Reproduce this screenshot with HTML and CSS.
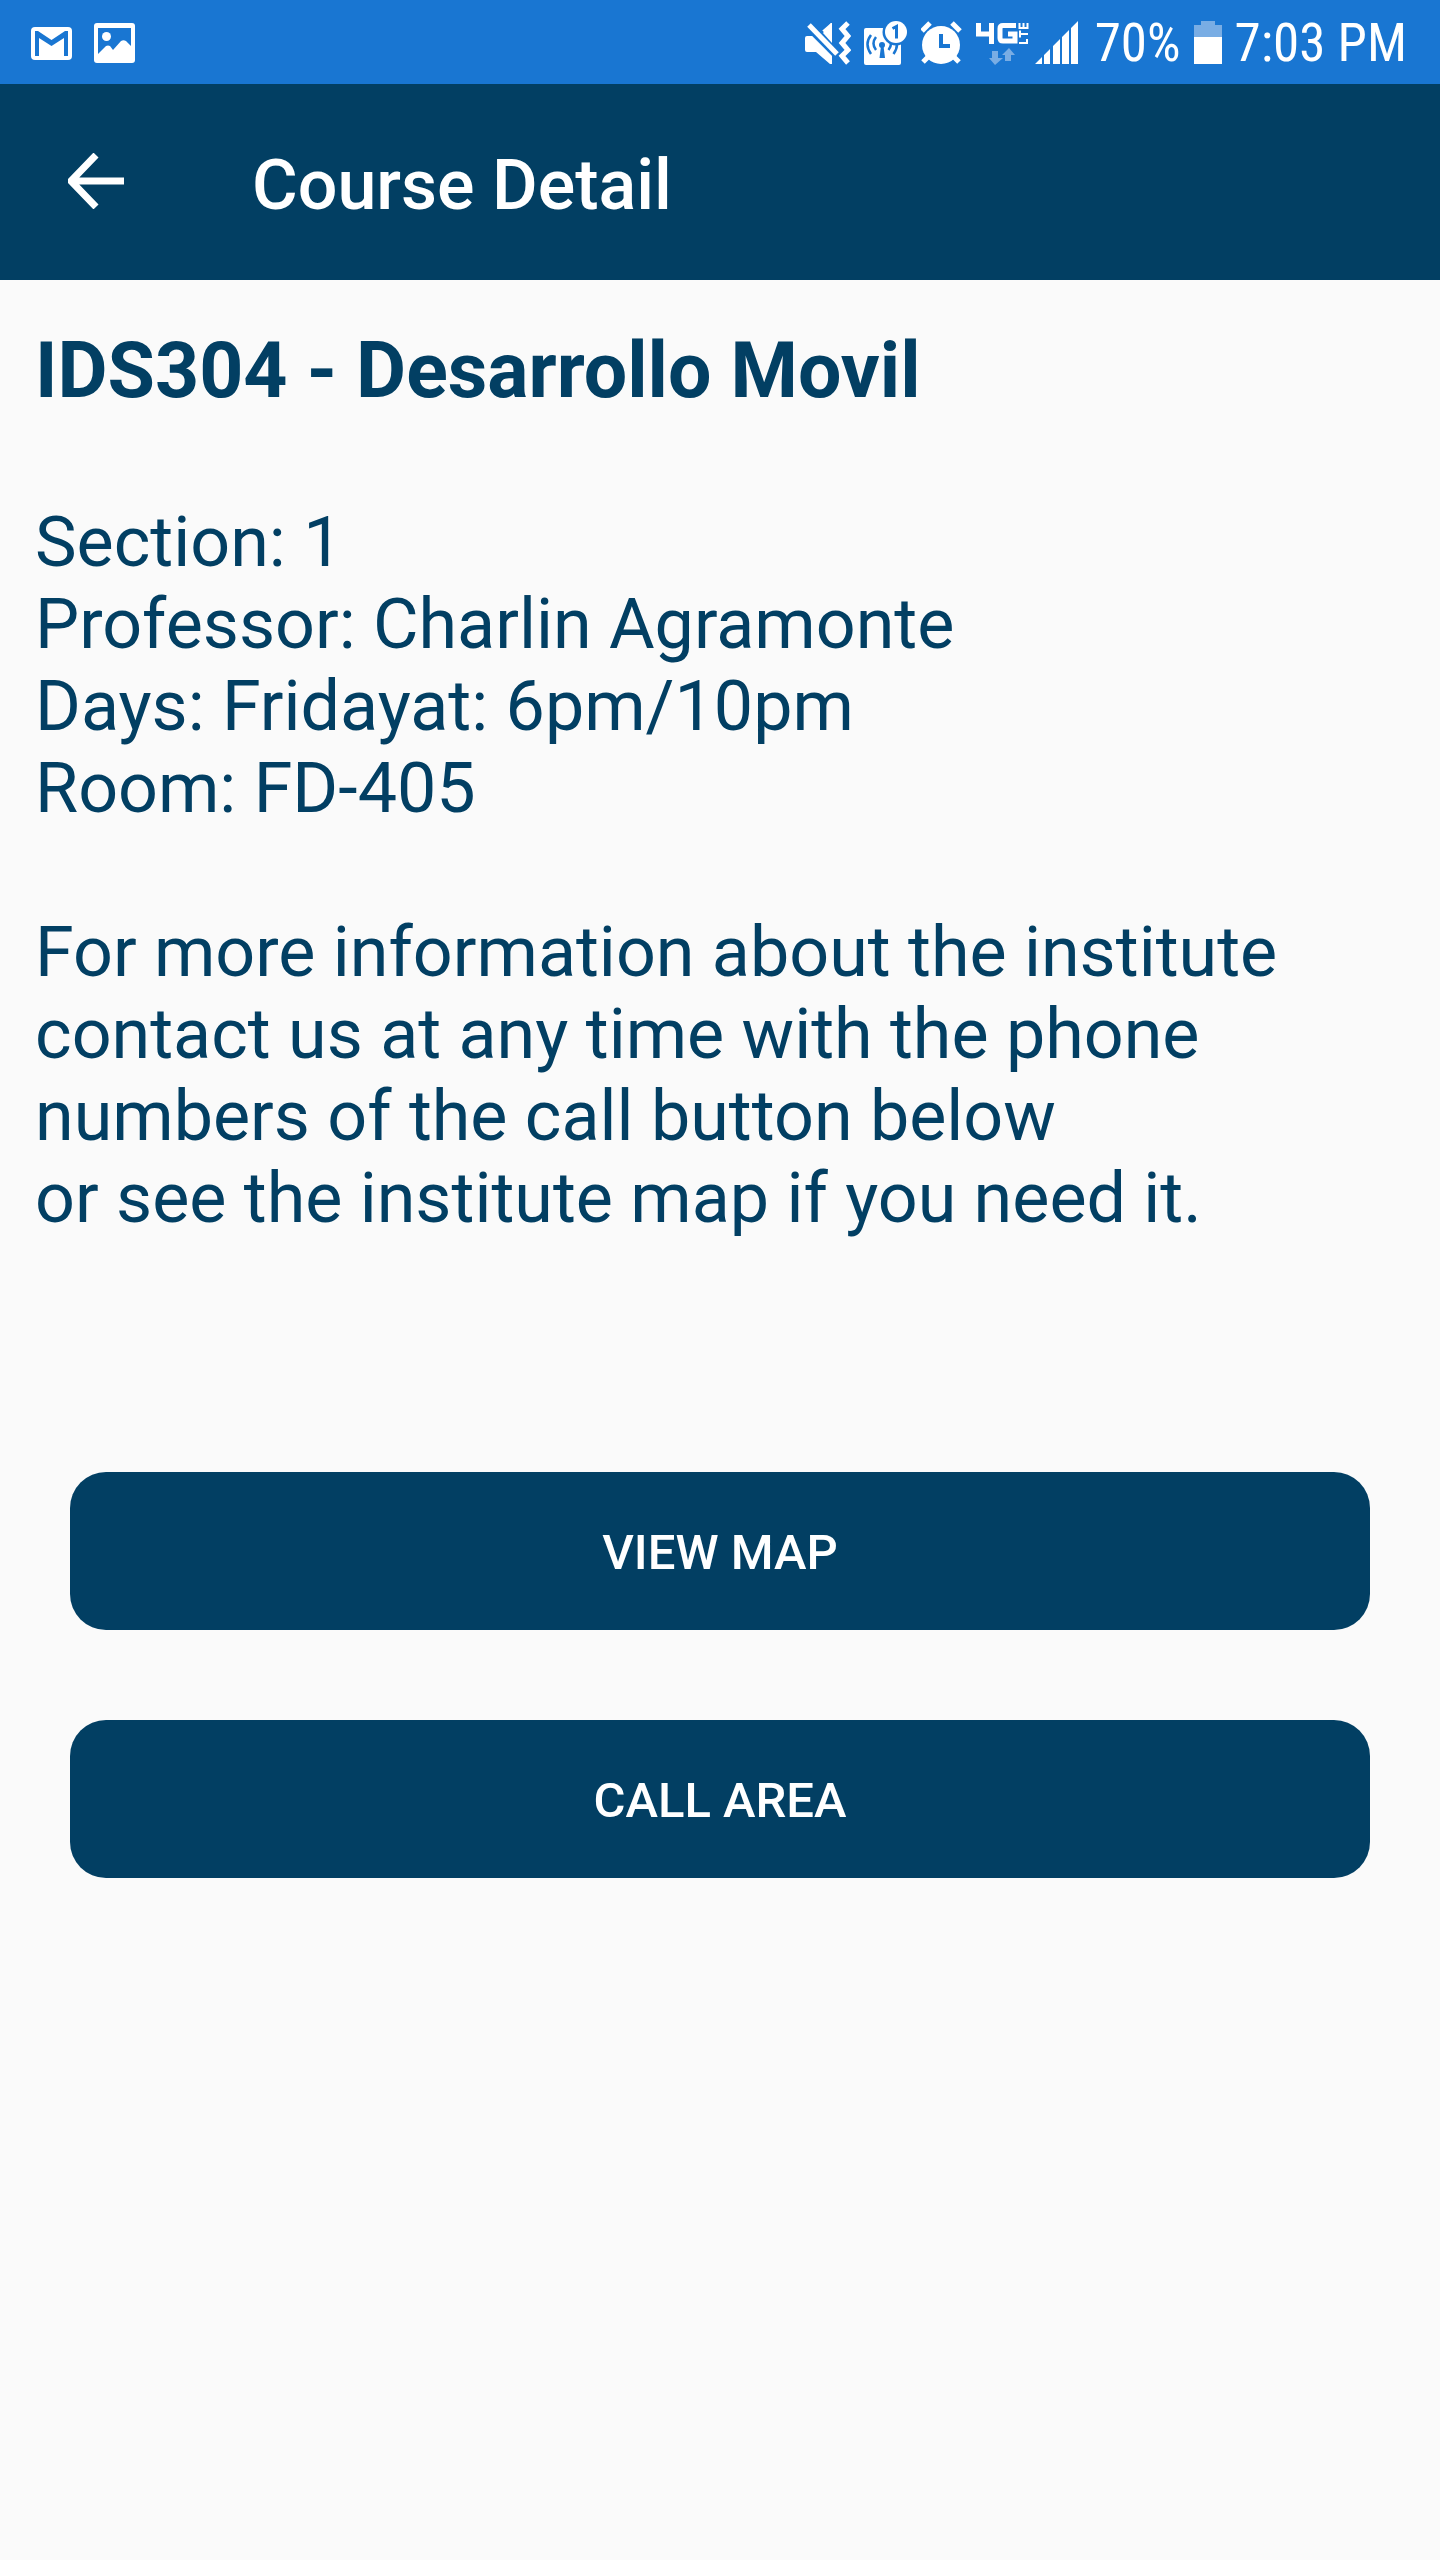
FILE: index.html
```html
<!DOCTYPE html>
<html lang="en">
<head>
<meta charset="utf-8">
<meta name="viewport" content="width=device-width, initial-scale=1">
<title>Course Detail</title>
<link rel="stylesheet" href="styles.css">
</head>
<body>
<div class="status-bar">
  <div class="notifications">
    <svg class="icon" width="41" height="40" viewBox="0 0 41 40" role="img" aria-label="Gmail">
      <rect y="4" width="41" height="33" rx="4" fill="#fff"/>
      <path d="M4 8h3l13.500 9L34 8h3v25h-4V15L20.500 23 8 15v18H4z" fill="#1976d2"/>
    </svg>
    <svg class="icon" width="41" height="40" viewBox="0 0 41 40" role="img" aria-label="Picture">
      <rect width="41" height="40" rx="3" fill="#fff"/>
      <path d="M4 5h33v18l-5-5q-2.500-1.500-5 0l-8 9-3-4q-2-1-4 0l-8 8z" fill="#1976d2"/>
      <circle cx="12.500" cy="13.500" r="4.500" fill="#fff"/>
    </svg>
  </div>
  <div class="indicators">
    <svg class="icon" width="46" height="44" viewBox="0 0 46 44" role="img" aria-label="Muted, vibrate">
      <path d="M0 17q0-2 2-2h9L26 2h1v41h-2L11 31H2q-2 0-2-2z" fill="#fff"/>
      <path d="M-1 -1L36 36" stroke="#1976d2" stroke-width="11"/>
      <path d="M0 0h17v10L8 14H0z" fill="#1976d2"/>
      <path d="M18 12L26 2h1v20z" fill="#fff"/>
      <path d="M4 4L32 33" stroke="#fff" stroke-width="5"/>
      <path d="M43 2l-6 6 6 7-6 7 6 7-6 6 6 7" fill="none" stroke="#fff" stroke-width="5"/>
    </svg>
    <svg class="icon" width="44" height="44" viewBox="0 0 44 44" role="img" aria-label="Hotspot, one device">
      <rect y="7" width="37" height="37" rx="2" fill="#fff"/>
      <path d="M12 16q-5 6.500 0 13M7 14q-7 9 0 19M24.500 16q5 6.500 0 13M29.500 14q7 9 0 19" fill="none" stroke="#1976d2" stroke-width="2.500"/>
      <circle cx="18" cy="24" r="3" fill="#1976d2"/>
      <path d="M17 25h2.500l1.500 12h-5.500z" fill="#1976d2"/>
      <circle cx="32" cy="11" r="13.500" fill="#1976d2"/>
      <circle cx="32" cy="11" r="11" fill="#fff"/>
      <path d="M28.500 7.500l4-2v12" fill="none" stroke="#1976d2" stroke-width="3"/>
    </svg>
    <svg class="icon" width="42" height="44" viewBox="0 0 42 44" role="img" aria-label="Alarm">
      <circle cx="20" cy="24" r="19" fill="#fff"/>
      <path d="M1 10l8-8M31 2l8 8M8 35l-6 6M32 35l6 6" stroke="#fff" stroke-width="5"/>
      <path d="M20 13v12h9" fill="none" stroke="#1976d2" stroke-width="4"/>
    </svg>
    <div class="network">
      <svg class="icon" width="53" height="44" viewBox="0 0 53 44" role="img" aria-label="4G LTE">
        <path d="M2.500 2v11h14M15.500 2v21M40 4.500H27q-3 0-3 3V17q0 3 3 3h12v-7h-7" fill="none" stroke="#fff" stroke-width="5"/>
        <path d="M43 22h9M51 23v-5M43 13h9M44 16.500v-7M43.500 2v5h8V2M47.500 7V2" fill="none" stroke="#fff" stroke-width="2"/>
        <path d="M16 30h6v7h5l-8 7-6-7h3zM29 40v-6h-3l7-7 6 7h-4v6z" fill="#79ade4"/>
      </svg>
      <svg class="icon" width="43" height="44" viewBox="0 0 43 44" role="img" aria-label="Signal strength">
        <path d="M0 43l7-7v7zM9 34l6-6v15H9zM18 25l7-7v25h-7zM27 16l7-7v34h-7zM36 7l7-7v43h-7z" fill="#fff"/>
      </svg>
    </div>
    <span class="battery-level">70%</span>
    <svg class="icon" width="28" height="44" viewBox="0 0 28 44" role="img" aria-label="Battery">
      <path d="M7 0h14v4h7v13H0V4h7z" fill="#79ade4"/>
      <path d="M0 16h28v27H0z" fill="#fff"/>
    </svg>
    <time class="clock">7:03 PM</time>
  </div>
</div>
<header class="toolbar">
  <button class="back" type="button" aria-label="Back">
    <svg width="56" height="56" viewBox="0 0 56 56"><path d="M56 28H6M28 2L3 28l25 26" fill="none" stroke="#fff" stroke-width="7"/></svg>
  </button>
  <h1 class="toolbar-title">Course Detail</h1>
</header>
<main class="content">
  <h2 class="course-name">IDS304 - Desarrollo Movil</h2>
  <p class="text">Section: 1<br>Professor: Charlin Agramonte<br>Days: Fridayat: 6pm/10pm<br>Room: FD-405</p>
  <p class="text">For more information about the institute contact us at any time with the phone numbers of the call button below<br>or see the institute map if you need it.</p>
  <div class="actions">
    <button class="action" type="button">VIEW MAP</button>
    <button class="action" type="button">CALL AREA</button>
  </div>
</main>
</body>
</html>
```
FILE: styles.css
```css
* {
  box-sizing: border-box;
}

body {
  margin: 0;
  min-height: 100vh;
  background: #fafafa;
  color: #023f63;
  font-family: Roboto, sans-serif;
}

.status-bar {
  display: flex;
  justify-content: space-between;
  align-items: center;
  height: 84px;
  padding: 2px 33px 0 31px;
  background: #1976d2;
  color: #fff;
  font-family: "Roboto Condensed", Roboto, sans-serif;
  font-size: 53px;
  line-height: 62px;
}

.notifications {
  display: flex;
  gap: 22px;
}

.indicators {
  display: flex;
  align-items: center;
  gap: 13px;
}

.network {
  display: flex;
  gap: 6px;
  margin-right: 4px;
}

.icon {
  flex: none;
}

.toolbar {
  display: flex;
  align-items: center;
  height: 196px;
  padding: 0 56px;
  background: #023f63;
  color: #fff;
}

.back {
  display: flex;
  width: 196px;
  padding: 0 0 2px 12px;
  border: 0;
  background: none;
  cursor: pointer;
}

.toolbar-title {
  margin: 0;
  padding-top: 6px;
  font-size: 70px;
  font-weight: 500;
  line-height: 82px;
}

.content {
  padding: 46px 35px;
}

.course-name {
  margin: 0 0 85px;
  font-size: 77px;
  font-weight: 700;
  line-height: 90px;
}

.text {
  margin: 0 0 82px;
  font-size: 70px;
  line-height: 82px;
}

.actions {
  display: flex;
  flex-direction: column;
  gap: 90px;
  padding: 151px 35px 0;
}

.action {
  height: 158px;
  padding: 4px 0 0;
  border: 0;
  border-radius: 36px;
  background: #023f63;
  color: #fff;
  font: 500 49px/58px Roboto, sans-serif;
  cursor: pointer;
}
```
